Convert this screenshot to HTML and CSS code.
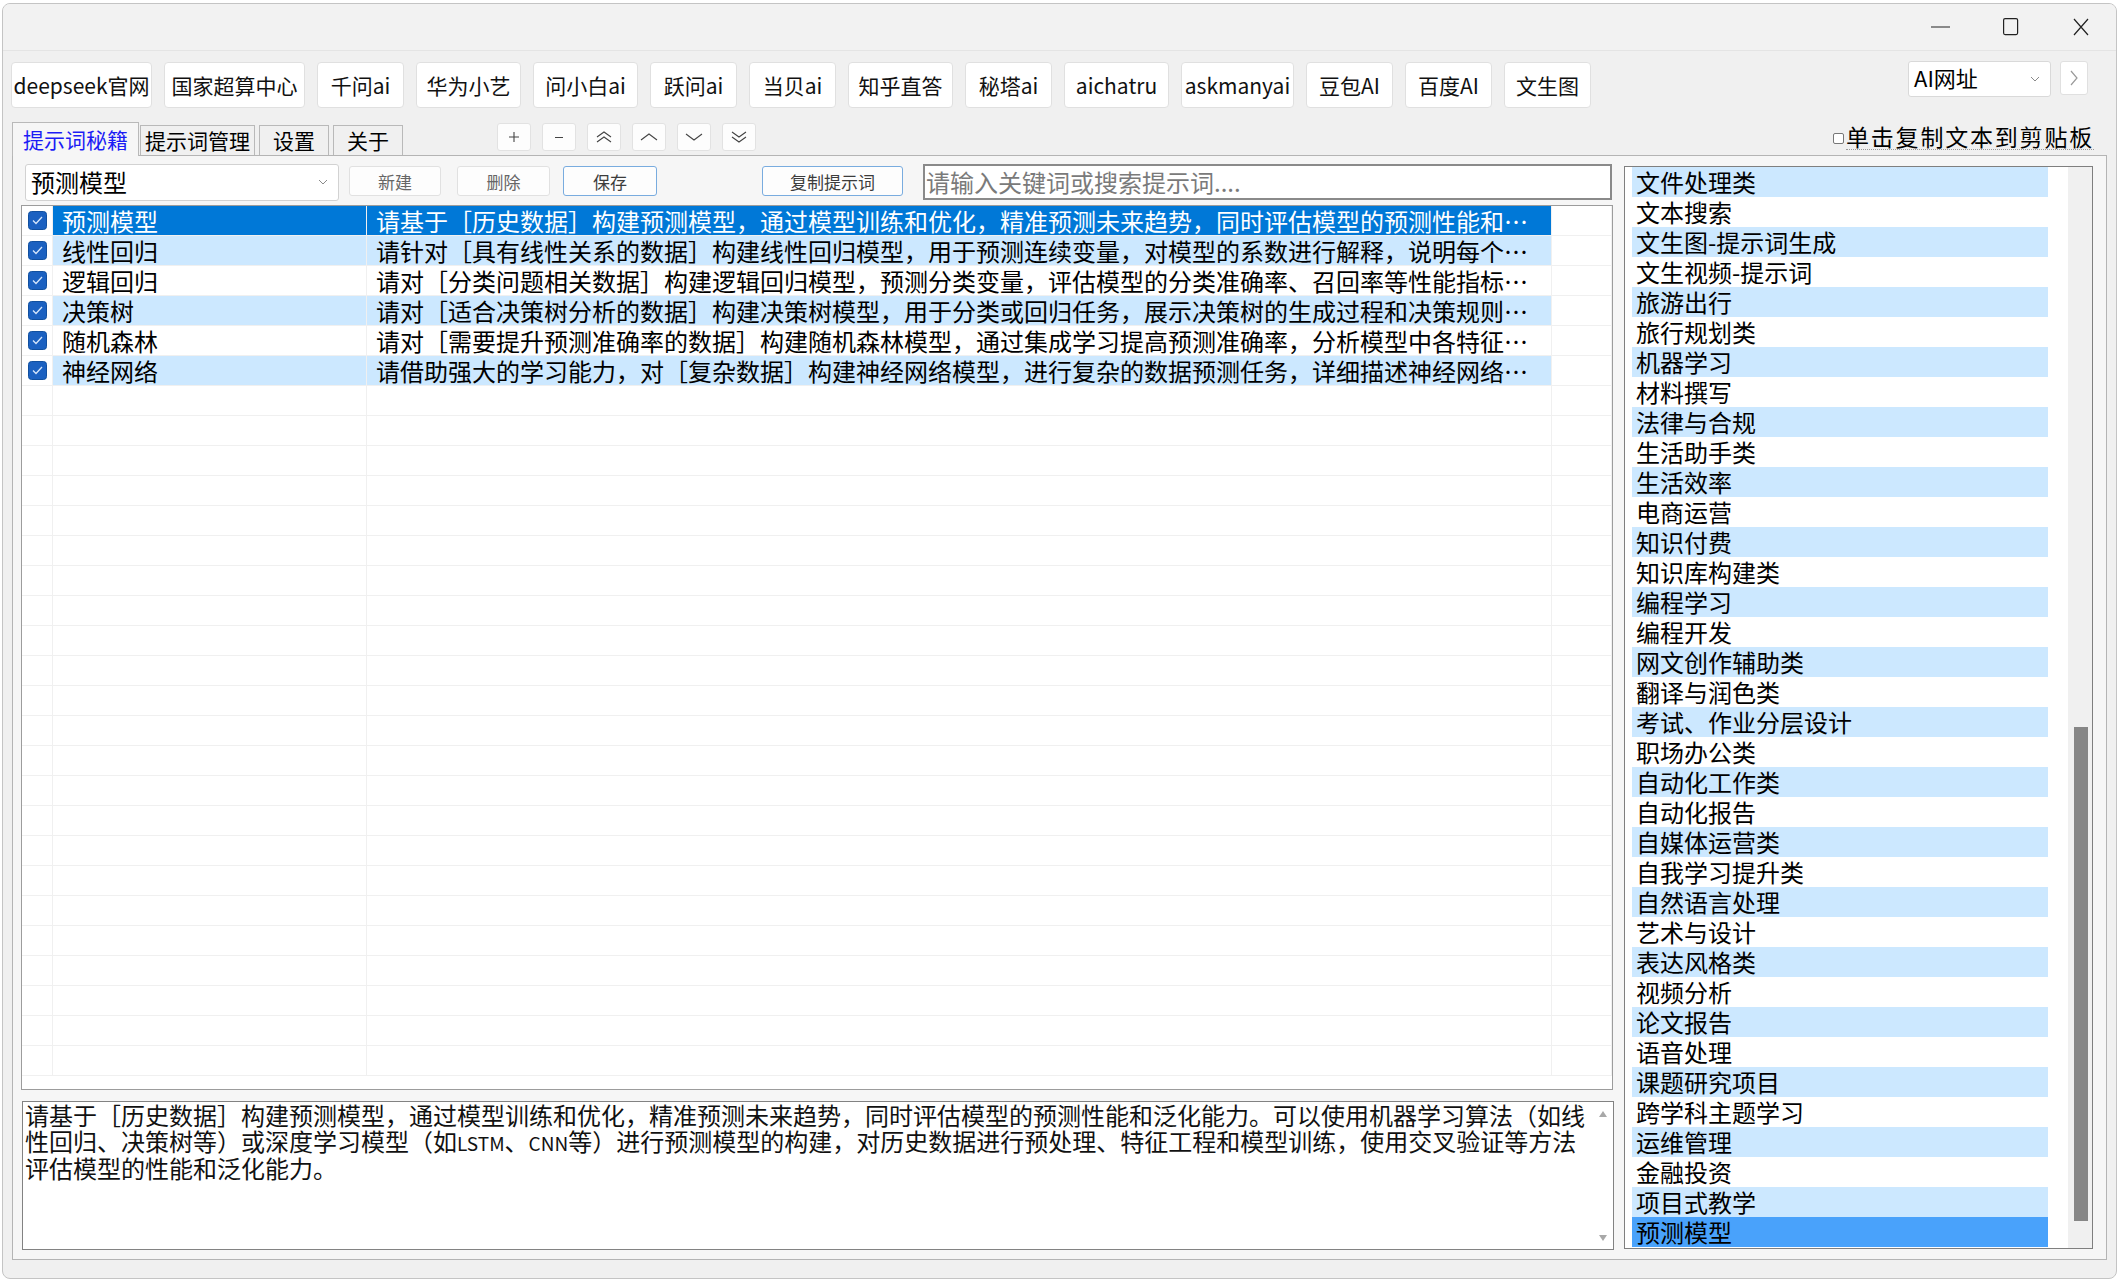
FILE: index.html
```html
<!DOCTYPE html>
<html lang="zh-CN">

<head>
    <meta charset="UTF-8">
    <title>提示词秘籍</title>
    <link rel="stylesheet" href="styles.css">
</head>

<body>
    <div class="window">
        <div class="titlebar">
            <div class="caption-btn">
                <svg width="20" height="4"><line x1="0" y1="2" x2="19" y2="2" stroke="#222" stroke-width="1.2"/></svg>
            </div>
            <div class="caption-btn">
                <svg width="16" height="18"><rect x="0.6" y="0.6" width="14" height="16" rx="1.5" fill="none" stroke="#222" stroke-width="1.2"/></svg>
            </div>
            <div class="caption-btn">
                <svg width="16" height="18"><path d="M1 1 L15 17 M15 1 L1 17" stroke="#222" stroke-width="1.2"/></svg>
            </div>
        </div>

        <div class="client">
            <!-- 网站快捷按钮 -->
            <div class="site-bar">
                <button class="site w-l">deepseek官网</button>
                <button class="site w-l">国家超算中心</button>
                <button class="site w-s">千问ai</button>
                <button class="site w-m">华为小艺</button>
                <button class="site w-m">问小白ai</button>
                <button class="site w-s">跃问ai</button>
                <button class="site w-s">当贝ai</button>
                <button class="site w-m">知乎直答</button>
                <button class="site w-s">秘塔ai</button>
                <button class="site w-m">aichatru</button>
                <button class="site w-xl">askmanyai</button>
                <button class="site w-s">豆包AI</button>
                <button class="site w-s">百度AI</button>
                <button class="site w-s">文生图</button>

                <div class="site-right">
                    <div class="combo url-combo">
                        <span>AI网址</span>
                        <svg width="10" height="6"><polyline points="1,1 5,5 9,1" fill="none" stroke="#8a8a8a"/></svg>
                    </div>
                    <button class="next-btn">
                        <svg width="8" height="16"><polyline points="1,1 7,8 1,15" fill="none" stroke="#9a9a9a" stroke-width="1.2"/></svg>
                    </button>
                </div>
            </div>

            <!-- 选项卡 -->
            <div class="tab-bar">
                <div class="tabs">
                    <div class="tab active">提示词秘籍</div>
                    <div class="tab">提示词管理</div>
                    <div class="tab">设置</div>
                    <div class="tab">关于</div>
                </div>
                <div class="order-btns">
                    <button class="mini">
                        <svg width="12" height="12"><path d="M1 6 H11 M6 1 V11" stroke="#444" stroke-width="1.1"/></svg>
                    </button>
                    <button class="mini">
                        <svg width="12" height="12"><path d="M2 6.5 H10" stroke="#444" stroke-width="1.1"/></svg>
                    </button>
                    <button class="mini">
                        <svg width="18" height="14"><polyline points="2,7 9,2 16,7" fill="none" stroke="#444" stroke-width="1.1"/><polyline points="2,12 9,7 16,12" fill="none" stroke="#444" stroke-width="1.1"/></svg>
                    </button>
                    <button class="mini">
                        <svg width="20" height="10"><polyline points="2,8 10,2 18,8" fill="none" stroke="#444" stroke-width="1.1"/></svg>
                    </button>
                    <button class="mini">
                        <svg width="20" height="10"><polyline points="2,2 10,8 18,2" fill="none" stroke="#444" stroke-width="1.1"/></svg>
                    </button>
                    <button class="mini">
                        <svg width="18" height="14"><polyline points="2,2 9,7 16,2" fill="none" stroke="#444" stroke-width="1.1"/><polyline points="2,7 9,12 16,7" fill="none" stroke="#444" stroke-width="1.1"/></svg>
                    </button>
                </div>
                <label class="copy-opt">
                    <span class="tick-box"></span>
                    <span class="copy-text">单击复制文本到剪贴板</span>
                </label>
            </div>

            <div class="panel">
                <div class="main-col">
                    <div class="toolbar">
                        <div class="combo preset-combo">
                            <span>预测模型</span>
                            <svg width="10" height="6"><polyline points="1,1 5,5 9,1" fill="none" stroke="#8a8a8a"/></svg>
                        </div>
                        <button class="act act-new">新建</button>
                        <button class="act act-del">删除</button>
                        <button class="act act-save focus">保存</button>
                        <button class="act act-copy focus">复制提示词</button>
                        <div class="search">请输入关键词或搜索提示词....</div>
                    </div>

                    <div class="grid">
                        <div class="row selected">
                            <div class="c-chk"><svg class="chk" width="19" height="19"><rect x="0.5" y="0.5" width="18" height="18" rx="3" fill="#1b61c1" stroke="#11509f"/><polyline points="5,9.5 8,12.5 14,6" fill="none" stroke="#d6e6fb" stroke-width="1.3"/></svg></div>
                            <div class="c-name">预测模型</div>
                            <div class="c-text">请基于［历史数据］构建预测模型，通过模型训练和优化，精准预测未来趋势，同时评估模型的预测性能和泛化能力。可以使用机器学习算法</div>
                            <div class="c-end"></div>
                        </div>
                        <div class="row alt">
                            <div class="c-chk"><svg class="chk" width="19" height="19"><rect x="0.5" y="0.5" width="18" height="18" rx="3" fill="#1b61c1" stroke="#11509f"/><polyline points="5,9.5 8,12.5 14,6" fill="none" stroke="#d6e6fb" stroke-width="1.3"/></svg></div>
                            <div class="c-name">线性回归</div>
                            <div class="c-text">请针对［具有线性关系的数据］构建线性回归模型，用于预测连续变量，对模型的系数进行解释，说明每个自变量对因变量的影响程度。</div>
                            <div class="c-end"></div>
                        </div>
                        <div class="row">
                            <div class="c-chk"><svg class="chk" width="19" height="19"><rect x="0.5" y="0.5" width="18" height="18" rx="3" fill="#1b61c1" stroke="#11509f"/><polyline points="5,9.5 8,12.5 14,6" fill="none" stroke="#d6e6fb" stroke-width="1.3"/></svg></div>
                            <div class="c-name">逻辑回归</div>
                            <div class="c-text">请对［分类问题相关数据］构建逻辑回归模型，预测分类变量，评估模型的分类准确率、召回率等性能指标，并分析各特征的影响。</div>
                            <div class="c-end"></div>
                        </div>
                        <div class="row alt">
                            <div class="c-chk"><svg class="chk" width="19" height="19"><rect x="0.5" y="0.5" width="18" height="18" rx="3" fill="#1b61c1" stroke="#11509f"/><polyline points="5,9.5 8,12.5 14,6" fill="none" stroke="#d6e6fb" stroke-width="1.3"/></svg></div>
                            <div class="c-name">决策树</div>
                            <div class="c-text">请对［适合决策树分析的数据］构建决策树模型，用于分类或回归任务，展示决策树的生成过程和决策规则，并进行剪枝优化。</div>
                            <div class="c-end"></div>
                        </div>
                        <div class="row">
                            <div class="c-chk"><svg class="chk" width="19" height="19"><rect x="0.5" y="0.5" width="18" height="18" rx="3" fill="#1b61c1" stroke="#11509f"/><polyline points="5,9.5 8,12.5 14,6" fill="none" stroke="#d6e6fb" stroke-width="1.3"/></svg></div>
                            <div class="c-name">随机森林</div>
                            <div class="c-text">请对［需要提升预测准确率的数据］构建随机森林模型，通过集成学习提高预测准确率，分析模型中各特征的重要性。</div>
                            <div class="c-end"></div>
                        </div>
                        <div class="row alt">
                            <div class="c-chk"><svg class="chk" width="19" height="19"><rect x="0.5" y="0.5" width="18" height="18" rx="3" fill="#1b61c1" stroke="#11509f"/><polyline points="5,9.5 8,12.5 14,6" fill="none" stroke="#d6e6fb" stroke-width="1.3"/></svg></div>
                            <div class="c-name">神经网络</div>
                            <div class="c-text">请借助强大的学习能力，对［复杂数据］构建神经网络模型，进行复杂的数据预测任务，详细描述神经网络的结构和训练过程。</div>
                            <div class="c-end"></div>
                        </div>
                        <div class="row"><div class="c-chk"></div><div class="c-name"></div><div class="c-text"></div><div class="c-end"></div></div>
                        <div class="row"><div class="c-chk"></div><div class="c-name"></div><div class="c-text"></div><div class="c-end"></div></div>
                        <div class="row"><div class="c-chk"></div><div class="c-name"></div><div class="c-text"></div><div class="c-end"></div></div>
                        <div class="row"><div class="c-chk"></div><div class="c-name"></div><div class="c-text"></div><div class="c-end"></div></div>
                        <div class="row"><div class="c-chk"></div><div class="c-name"></div><div class="c-text"></div><div class="c-end"></div></div>
                        <div class="row"><div class="c-chk"></div><div class="c-name"></div><div class="c-text"></div><div class="c-end"></div></div>
                        <div class="row"><div class="c-chk"></div><div class="c-name"></div><div class="c-text"></div><div class="c-end"></div></div>
                        <div class="row"><div class="c-chk"></div><div class="c-name"></div><div class="c-text"></div><div class="c-end"></div></div>
                        <div class="row"><div class="c-chk"></div><div class="c-name"></div><div class="c-text"></div><div class="c-end"></div></div>
                        <div class="row"><div class="c-chk"></div><div class="c-name"></div><div class="c-text"></div><div class="c-end"></div></div>
                        <div class="row"><div class="c-chk"></div><div class="c-name"></div><div class="c-text"></div><div class="c-end"></div></div>
                        <div class="row"><div class="c-chk"></div><div class="c-name"></div><div class="c-text"></div><div class="c-end"></div></div>
                        <div class="row"><div class="c-chk"></div><div class="c-name"></div><div class="c-text"></div><div class="c-end"></div></div>
                        <div class="row"><div class="c-chk"></div><div class="c-name"></div><div class="c-text"></div><div class="c-end"></div></div>
                        <div class="row"><div class="c-chk"></div><div class="c-name"></div><div class="c-text"></div><div class="c-end"></div></div>
                        <div class="row"><div class="c-chk"></div><div class="c-name"></div><div class="c-text"></div><div class="c-end"></div></div>
                        <div class="row"><div class="c-chk"></div><div class="c-name"></div><div class="c-text"></div><div class="c-end"></div></div>
                        <div class="row"><div class="c-chk"></div><div class="c-name"></div><div class="c-text"></div><div class="c-end"></div></div>
                        <div class="row"><div class="c-chk"></div><div class="c-name"></div><div class="c-text"></div><div class="c-end"></div></div>
                        <div class="row"><div class="c-chk"></div><div class="c-name"></div><div class="c-text"></div><div class="c-end"></div></div>
                        <div class="row"><div class="c-chk"></div><div class="c-name"></div><div class="c-text"></div><div class="c-end"></div></div>
                        <div class="row"><div class="c-chk"></div><div class="c-name"></div><div class="c-text"></div><div class="c-end"></div></div>
                        <div class="row"><div class="c-chk"></div><div class="c-name"></div><div class="c-text"></div><div class="c-end"></div></div>
                    </div>

                    <div class="detail">
                        <div class="detail-text">
                            <div class="line">请基于［历史数据］构建预测模型，通过模型训练和优化，精准预测未来趋势，同时评估模型的预测性能和泛化能力。可以使用机器学习算法（如线</div>
                            <div class="line">性回归、决策树等）或深度学习模型（如<span class="lat">LSTM</span>、<span class="lat">CNN</span>等）进行预测模型的构建，对历史数据进行预处理、特征工程和模型训练，使用交叉验证等方法</div>
                            <div class="line">评估模型的性能和泛化能力。</div>
                        </div>
                        <div class="detail-scroll">
                            <span class="arrow-up"></span>
                            <span class="arrow-down"></span>
                        </div>
                    </div>
                </div>

                <div class="cat-list">
                    <ul class="cats">
                        <li>文件处理类</li>
                        <li>文本搜索</li>
                        <li>文生图-提示词生成</li>
                        <li>文生视频-提示词</li>
                        <li>旅游出行</li>
                        <li>旅行规划类</li>
                        <li>机器学习</li>
                        <li>材料撰写</li>
                        <li>法律与合规</li>
                        <li>生活助手类</li>
                        <li>生活效率</li>
                        <li>电商运营</li>
                        <li>知识付费</li>
                        <li>知识库构建类</li>
                        <li>编程学习</li>
                        <li>编程开发</li>
                        <li>网文创作辅助类</li>
                        <li>翻译与润色类</li>
                        <li>考试、作业分层设计</li>
                        <li>职场办公类</li>
                        <li>自动化工作类</li>
                        <li>自动化报告</li>
                        <li>自媒体运营类</li>
                        <li>自我学习提升类</li>
                        <li>自然语言处理</li>
                        <li>艺术与设计</li>
                        <li>表达风格类</li>
                        <li>视频分析</li>
                        <li>论文报告</li>
                        <li>语音处理</li>
                        <li>课题研究项目</li>
                        <li>跨学科主题学习</li>
                        <li>运维管理</li>
                        <li>金融投资</li>
                        <li>项目式教学</li>
                        <li class="current">预测模型</li>
                    </ul>
                    <div class="vscroll">
                        <div class="thumb"></div>
                    </div>
                </div>
            </div>
        </div>
    </div>
</body>

</html>
```

FILE: styles.css
```css
* {
    margin: 0;
    padding: 0;
    box-sizing: border-box;
}

body {
    width: 2120px;
    height: 1282px;
    padding: 3px 0 0 2px;
    background: #ffffff;
    font-family: "Noto Sans CJK SC", "Noto Sans", sans-serif;
    color: #000;
    overflow: hidden;
}

button {
    font-family: inherit;
    background: none;
    border: none;
    color: inherit;
}

.window {
    width: 2115px;
    height: 1276px;
    border: 1px solid #c4c4c4;
    border-radius: 8px;
    background: #f0f0f0;
    overflow: hidden;
    display: flex;
    flex-direction: column;
}

/* 标题栏 */
.titlebar {
    height: 47px;
    flex-shrink: 0;
    display: flex;
    justify-content: flex-end;
    background: #f2f2f2;
    border-bottom: 1px solid #e4e4e4;
}

.caption-btn {
    width: 70px;
    height: 46px;
    display: flex;
    align-items: center;
    justify-content: center;
}

.client {
    flex: 1;
    display: flex;
    flex-direction: column;
}

/* 网站按钮栏 */
.site-bar {
    margin-top: 11px;
    height: 46px;
    padding: 0 28px 0 8px;
    display: flex;
    align-items: flex-start;
    gap: 12px;
}

.site {
    height: 46px;
    background: #fff;
    border: 1px solid #e0e0e0;
    border-radius: 4px;
    font-size: 21px;
    line-height: 1;
    color: #111;
    display: flex;
    align-items: center;
    justify-content: center;
}

.w-s { width: 87px; }
.w-m { width: 105px; }
.w-l { width: 141px; }
.w-xl { width: 113px; }

.site-right {
    margin-left: auto;
    display: flex;
    align-items: flex-start;
    gap: 9px;
}

.combo {
    background: #fff;
    border: 1px solid #d9d9d9;
    border-radius: 3px;
    display: flex;
    align-items: center;
    justify-content: space-between;
    font-size: 24px;
    line-height: 1;
}

.url-combo {
    margin-top: -1px;
    width: 143px;
    height: 36px;
    padding: 0 10px 4px 5px;
    font-size: 22px;
}

.url-combo svg {
    margin-top: 4px;
}

.next-btn {
    margin-top: -1px;
    width: 28px;
    height: 34px;
    background: #fff;
    border: 1px solid #e0e0e0;
    border-radius: 3px;
    display: flex;
    align-items: center;
    justify-content: center;
}

/* 选项卡 */
.tab-bar {
    margin-top: 14px;
    height: 34px;
    margin-bottom: -1px;
    padding-left: 9px;
    display: flex;
    align-items: flex-end;
    position: relative;
    z-index: 1;
}

.tabs {
    display: flex;
    align-items: flex-end;
}

.tab {
    height: 30px;
    min-width: 70px;
    padding: 0 4px;
    margin-bottom: 1px;
    border: 1px solid #b9b9b9;
    border-bottom: none;
    background: #f0f0f0;
    font-size: 21px;
    line-height: 28px;
    text-align: center;
}

.tab + .tab {
    margin-left: 4px;
}

.tab.active {
    height: 34px;
    padding: 0 10px;
    margin-bottom: 0;
    background: #f6f6f6;
    color: #1c1cf5;
    line-height: 32px;
}

.tab.active + .tab {
    margin-left: 1px;
}

.order-btns {
    margin: 0 0 5px 94px;
    display: flex;
    gap: 11px;
}

.mini {
    width: 34px;
    height: 28px;
    background: #fdfdfd;
    border: 1px solid #e2e2e2;
    border-radius: 3px;
    display: flex;
    align-items: center;
    justify-content: center;
}

.copy-opt {
    margin: 0 22px 6px auto;
    display: flex;
    align-items: center;
    gap: 2px;
}

.tick-box {
    width: 11px;
    height: 11px;
    border: 1px solid #777;
    border-radius: 2px;
    background: #fff;
    margin-top: 2px;
}

.copy-text {
    font-size: 23px;
    line-height: 25px;
    letter-spacing: 1.8px;
    border-bottom: 1px dotted #9a9a9a;
}

/* 选项卡内容 */
.panel {
    margin-left: 9px;
    width: 2095px;
    height: 1105px;
    padding: 8px 13px 9px 8px;
    border: 1px solid #b4b4b4;
    background: #f6f6f6;
    display: flex;
}

.main-col {
    width: 1593px;
    display: flex;
    flex-direction: column;
}

.toolbar {
    height: 37px;
    display: flex;
    align-items: flex-start;
}

.preset-combo {
    margin-left: 4px;
    width: 314px;
    height: 37px;
    padding: 0 10px 2px 5px;
    border-color: #d2d2d2;
}

.act {
    margin-top: 2px;
    height: 30px;
    background: #fdfdfd;
    border: 1px solid #e1e1e1;
    border-radius: 3px;
    font-size: 17px;
    color: #666;
}

.act-new { width: 92px; margin-left: 10px; }
.act-del { width: 93px; margin-left: 16px; }
.act-save { width: 94px; margin-left: 13px; }
.act-copy { width: 141px; margin-left: 105px; }

.act.focus {
    border-color: #79acdf;
    color: #3c3c3c;
}

.search {
    margin-left: 20px;
    width: 689px;
    height: 36px;
    background: #fff;
    border: 2px solid #8a8a8a;
    padding-left: 1px;
    font-size: 24px;
    line-height: 31px;
    color: #7a7a7a;
}

/* 提示词表格 */
.grid {
    margin-top: 4px;
    height: 885px;
    width: 1592px;
    background: #fff;
    border: 1px solid #9c9c9c;
    overflow: hidden;
}

.row {
    height: 30px;
    display: flex;
    font-size: 24px;
    line-height: 29px;
}

.row > div {
    border-bottom: 1px solid #f0f0f0;
    border-right: 1px solid #f0f0f0;
}

.c-chk {
    width: 31px;
    display: flex;
    align-items: center;
    justify-content: center;
}

.c-name {
    width: 314px;
    padding-left: 9px;
    white-space: nowrap;
}

.c-text {
    width: 1185px;
    padding: 0 10px 0 9px;
    white-space: nowrap;
    overflow: hidden;
    text-overflow: ellipsis;
}

.c-end {
    flex: 1;
}

.row.alt .c-name,
.row.alt .c-text {
    background: #cce8ff;
}

.row.selected .c-name,
.row.selected .c-text {
    background: #0078d7;
    color: #fff;
}

/* 详细内容 */
.detail {
    margin: 11px 0 0 1px;
    height: 149px;
    width: 1592px;
    background: #fff;
    border: 1px solid #828282;
    display: flex;
}

.detail-text {
    flex: 1;
    padding-left: 2px;
    font-size: 24px;
    line-height: 25.5px;
    color: #111;
}

.line {
    white-space: nowrap;
}

.lat {
    font-size: 19px;
}

.detail-scroll {
    width: 21px;
    padding: 9px 0 8px;
    display: flex;
    flex-direction: column;
    justify-content: space-between;
    align-items: center;
}

.arrow-up {
    border: 4px solid transparent;
    border-top: none;
    border-bottom: 6px solid #a8a8a8;
}

.arrow-down {
    border: 4px solid transparent;
    border-bottom: none;
    border-top: 6px solid #a8a8a8;
}

/* 分类列表 */
.cat-list {
    margin: 2px 0 0 10px;
    width: 469px;
    height: 1083px;
    background: #fff;
    border: 1px solid #7f7f7f;
    display: flex;
}

.cats {
    list-style: none;
    margin-left: 7px;
    width: 416px;
}

.cats li {
    height: 30px;
    padding-left: 4px;
    font-size: 24px;
    line-height: 30px;
    white-space: nowrap;
}

.cats li:nth-child(odd) {
    background: #cce8ff;
}

.cats li.current {
    background: #49a2fb;
}

.vscroll {
    margin-left: 20px;
    width: 24px;
    background: #f0f0f0;
}

.thumb {
    margin: 560px 0 0 6px;
    width: 14px;
    height: 494px;
    background: #868686;
}
```
